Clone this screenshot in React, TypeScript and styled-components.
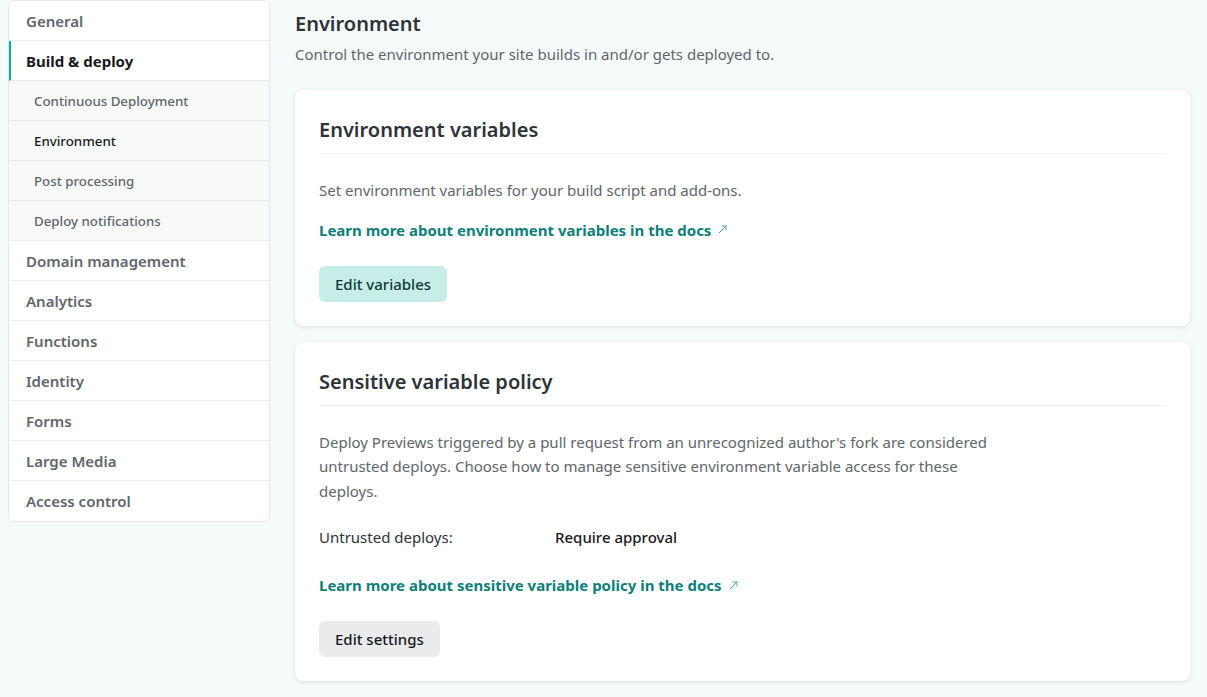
import styled, { createGlobalStyle } from "styled-components";

const GlobalStyle = createGlobalStyle`
  html, body {
    margin: 0;
    padding: 0;
    background: #f5fbfb;
    font-family: "Noto Sans", "Open Sans", "Liberation Sans", sans-serif;
    color: #2e3338;
  }
  * {
    box-sizing: border-box;
  }
`;

const Page = styled.div`
  display: flex;
  align-items: flex-start;
  gap: 25px;
  padding: 0 17px 0 8px;
  min-height: 697px;
`;

const Sidebar = styled.nav`
  width: 262px;
  flex-shrink: 0;
  background: #fff;
  border: 1px solid #e6e9eb;
  border-radius: 6px;
  overflow: hidden;
`;

const NavItem = styled.div<{ $sub?: boolean; $active?: boolean; $current?: boolean }>`
  height: 40px;
  display: flex;
  align-items: center;
  padding-left: ${(p) => (p.$sub ? "23px" : "15px")};
  border-bottom: 1px solid #eaecee;
  border-left: 3px solid ${(p) => (p.$active ? "#00ad9f" : "transparent")};
  background: ${(p) => (p.$sub ? "#f8f9f9" : "#fff")};
  font-size: ${(p) => (p.$sub ? "13.3px" : "15px")};
  font-weight: ${(p) => (p.$active ? 700 : p.$sub ? 500 : 600)};
  color: ${(p) => (p.$active || p.$current ? "#181a1c" : "#60666c")};
  margin-left: -1px;

  &:last-child {
    border-bottom: none;
  }
`;

const Main = styled.main`
  flex: 1;
  display: flex;
  flex-direction: column;
  padding-top: 10px;
`;

const PageTitle = styled.h1`
  margin: 0;
  font-size: 20px;
  line-height: 28px;
  font-weight: 600;
  color: #2e3338;
`;

const PageSubtitle = styled.p`
  margin: 4px 0 0;
  font-size: 15px;
  line-height: 24px;
  color: #60666c;
`;

const CardList = styled.div`
  display: flex;
  flex-direction: column;
  gap: 16px;
  margin-top: 24px;
`;

const Card = styled.section`
  background: #fff;
  border-radius: 8px;
  box-shadow: 0 1px 4px rgba(14, 30, 37, 0.12);
  padding: 24px;
`;

const CardTitle = styled.h2`
  margin: 0;
  padding-bottom: 8px;
  border-bottom: 1px solid #eef0f1;
  font-size: 20px;
  line-height: 31px;
  font-weight: 600;
  color: #2e3338;
`;

const CardBody = styled.div`
  padding-top: 24px;
  display: flex;
  flex-direction: column;
  align-items: flex-start;
`;

const Text = styled.p<{ $gap?: number }>`
  margin: 0 0 ${(p) => p.$gap ?? 15}px;
  max-width: 680px;
  font-size: 15px;
  line-height: 24.5px;
  color: #60666c;
`;

const DocLink = styled.a`
  display: inline-flex;
  align-items: center;
  gap: 7px;
  margin-bottom: 24px;
  font-size: 15px;
  line-height: 24px;
  font-weight: 700;
  color: #0d7f79;
  text-decoration: none;
`;

const Row = styled.div`
  display: grid;
  grid-template-columns: 236px 1fr;
  margin-bottom: 24px;
  font-size: 15px;
  line-height: 24px;
`;

const Label = styled.span`
  color: #2e3338;
`;

const Value = styled.span`
  color: #181a1c;
  font-weight: 500;
`;

const Button = styled.button<{ $primary?: boolean }>`
  height: 36px;
  padding: 0 16px;
  border: none;
  border-radius: 6px;
  font-family: inherit;
  font-size: 15px;
  font-weight: 500;
  background: ${(p) => (p.$primary ? "#c7ede8" : "#e9ebed")};
  color: ${(p) => (p.$primary ? "#0c3a37" : "#181a1c")};
  cursor: pointer;
`;

const ArrowIcon = () => (
  <svg width="9" height="9" viewBox="0 0 9 9" fill="none">
    <path d="M1 8 L8 1 M4 1 H8 V5" stroke="#4aa8a3" strokeWidth="1" strokeLinecap="round" />
  </svg>
);

const navItems = [
  { label: "General" },
  { label: "Build & deploy", active: true },
  { label: "Continuous Deployment", sub: true },
  { label: "Environment", sub: true, current: true },
  { label: "Post processing", sub: true },
  { label: "Deploy notifications", sub: true },
  { label: "Domain management" },
  { label: "Analytics" },
  { label: "Functions" },
  { label: "Identity" },
  { label: "Forms" },
  { label: "Large Media" },
  { label: "Access control" },
];

export default function App() {
  return (
    <>
      <GlobalStyle />
      <Page>
        <Sidebar>
          {navItems.map((item) => (
            <NavItem
              key={item.label}
              $sub={item.sub}
              $active={item.active}
              $current={item.current}
            >
              {item.label}
            </NavItem>
          ))}
        </Sidebar>
        <Main>
          <PageTitle>Environment</PageTitle>
          <PageSubtitle>Control the environment your site builds in and/or gets deployed to.</PageSubtitle>
          <CardList>
            <Card>
              <CardTitle>Environment variables</CardTitle>
              <CardBody>
                <Text>Set environment variables for your build script and add-ons.</Text>
                <DocLink href="#">
                  Learn more about environment variables in the docs <ArrowIcon />
                </DocLink>
                <Button $primary>Edit variables</Button>
              </CardBody>
            </Card>
            <Card>
              <CardTitle>Sensitive variable policy</CardTitle>
              <CardBody>
                <Text $gap={22}>
                  Deploy Previews triggered by a pull request from an unrecognized author's fork are
                  considered untrusted deploys. Choose how to manage sensitive environment variable
                  access for these deploys.
                </Text>
                <Row>
                  <Label>Untrusted deploys:</Label>
                  <Value>Require approval</Value>
                </Row>
                <DocLink href="#">
                  Learn more about sensitive variable policy in the docs <ArrowIcon />
                </DocLink>
                <Button>Edit settings</Button>
              </CardBody>
            </Card>
          </CardList>
        </Main>
      </Page>
    </>
  );
}
